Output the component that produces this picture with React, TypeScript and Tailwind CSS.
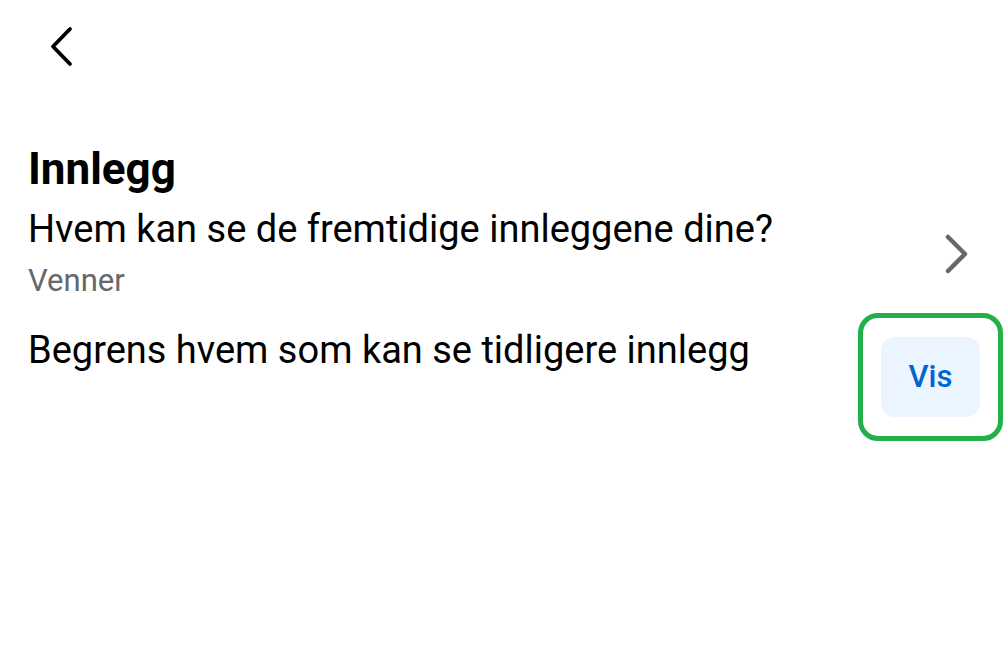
import React from 'react';

const App: React.FC = () => {
  return (
    <div
      className="w-[1008px] h-[662px] bg-white text-black overflow-hidden"
      style={{ fontFamily: 'Roboto, "Noto Sans", sans-serif' }}
    >
      <div className="pl-[46px] pt-[26px] h-[143px]">
        <svg width="32" height="42" viewBox="0 0 32 42" fill="none">
          <path
            d="M24 3 L7 20.5 L24 38"
            stroke="#000"
            strokeWidth="3.8"
            strokeLinecap="round"
            strokeLinejoin="round"
          />
        </svg>
      </div>

      <h1 className="pl-[28px] text-[44px] leading-[52px] font-bold">Innlegg</h1>

      <div className="flex items-center pl-[28px] pr-[38px] mt-[9px]">
        <div className="flex-1">
          <div className="text-[38px] leading-[50px]">
            Hvem kan se de fremtidige innleggene dine?
          </div>
          <div className="text-[31px] leading-[40px] mt-[7px] text-[#65676b]">Venner</div>
        </div>
        <svg width="26" height="42" viewBox="0 0 26 42" fill="none" className="mt-[3px]">
          <path
            d="M4 4 L21 21 L4 38"
            stroke="#65676b"
            strokeWidth="4.5"
            strokeLinecap="round"
            strokeLinejoin="round"
          />
        </svg>
      </div>

      <div className="flex items-start pl-[28px] pr-[5px] mt-[12px]">
        <div className="flex-1 text-[38px] leading-[50px] pt-[12px]">
          Begrens hvem som kan se tidligere innlegg
        </div>
        <div className="border-[5px] border-[#22b04b] rounded-[20px] px-[18px] py-[19px]">
          <button className="w-[99px] h-[80px] rounded-[14px] bg-[#ebf5ff] text-[#0064d1] text-[31px] font-medium">
            Vis
          </button>
        </div>
      </div>
    </div>
  );
};

export default App;
